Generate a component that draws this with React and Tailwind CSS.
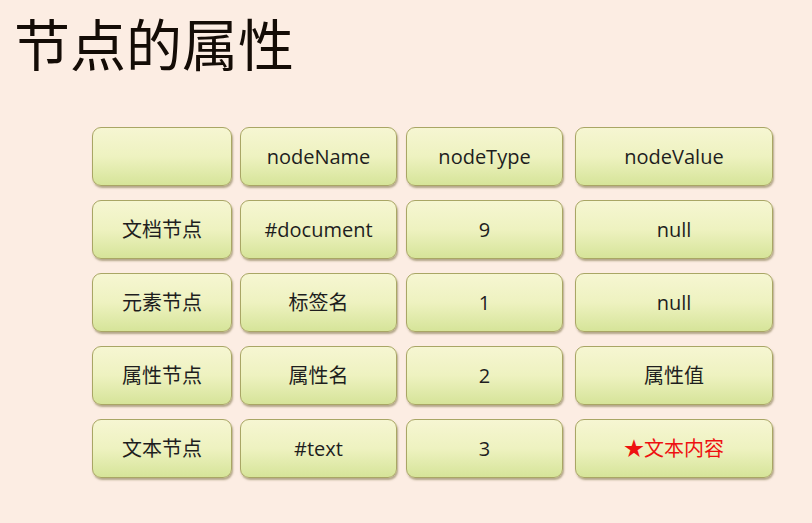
const header = ["", "nodeName", "nodeType", "nodeValue"];

const rows = [
  ["文档节点", "#document", "9", "null"],
  ["元素节点", "标签名", "1", "null"],
  ["属性节点", "属性名", "2", "属性值"],
  ["文本节点", "#text", "3", "★文本内容"],
];

function Cell({ children, red = false }) {
  return (
    <div
      className={
        "flex h-[59px] items-center justify-center rounded-[9px] border border-[#a9a665] bg-gradient-to-b from-[#f6f6d2] via-[#eef2c0] to-[#d6e499] text-[20px] shadow-[1px_2px_2px_rgba(110,100,50,0.5)] " +
        (red ? "text-[#ee1111]" : "text-[#1e1e1e]")
      }
    >
      {children}
    </div>
  );
}

export default function App() {
  return (
    <div
      className="h-[523px] w-[812px] overflow-hidden bg-[#fcede3]"
      style={{ fontFamily: '"Open Sans", "Noto Sans CJK SC", sans-serif' }}
    >
      <h1
        className="pl-[14px] text-[56px] leading-normal text-[#140c06]"
        style={{ fontFamily: '"Noto Sans CJK SC", sans-serif' }}
      >
        节点的属性
      </h1>

      <div className="ml-[92px] mt-[43px] flex flex-col gap-y-[14px]">
        {[header, ...rows].map((r, ri) => (
          <div key={ri} className="flex">
            <div className="w-[140px]">
              <Cell>{r[0]}</Cell>
            </div>
            <div className="ml-[8px] w-[157px]">
              <Cell>{r[1]}</Cell>
            </div>
            <div className="ml-[9px] w-[157px]">
              <Cell>{r[2]}</Cell>
            </div>
            <div className="ml-[12px] w-[198px]">
              <Cell red={r[3].startsWith("★")}>{r[3]}</Cell>
            </div>
          </div>
        ))}
      </div>
    </div>
  );
}
